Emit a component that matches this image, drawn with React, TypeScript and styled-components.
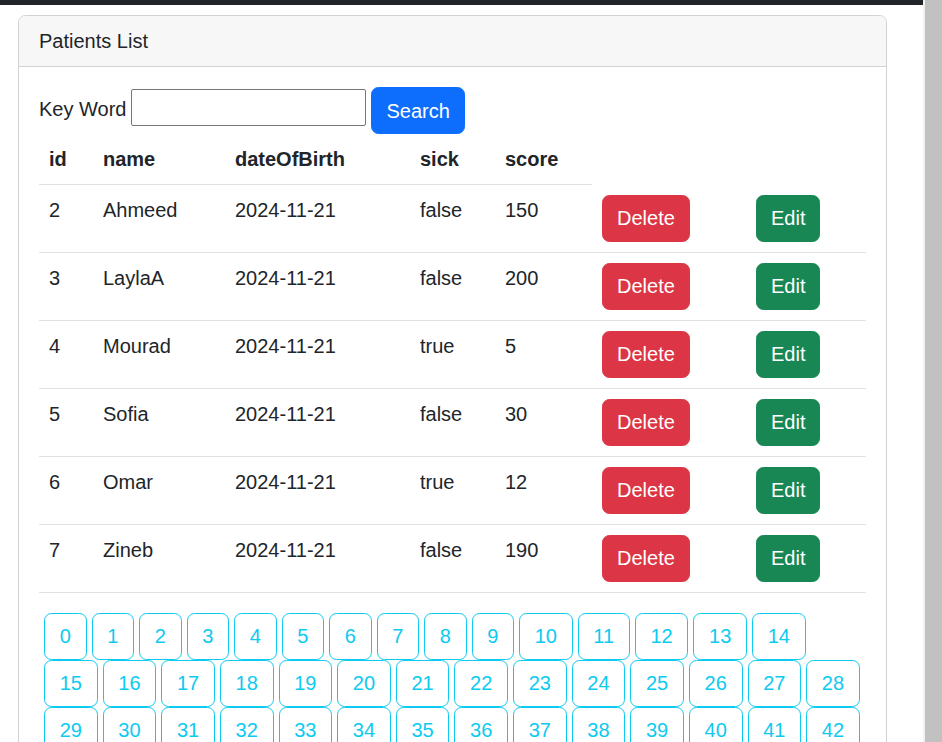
import React from "react";
import styled, { createGlobalStyle } from "styled-components";

const GlobalStyle = createGlobalStyle`
  html, body { margin: 0; padding: 0; height: 100%; overflow: hidden; }
  *, *::before, *::after { box-sizing: border-box; }
  body {
    font-family: "Liberation Sans", Arial, sans-serif;
    font-size: 20px;
    line-height: 30px;
    color: #212529;
    background: #ffffff;
  }
`;

const Shell = styled.div`
  display: flex;
  height: 100vh;
`;

const Viewport = styled.div`
  flex: 1;
  min-width: 0;
  overflow-y: auto;
  scrollbar-width: none;
  &::-webkit-scrollbar { display: none; }
`;

const ScrollRail = styled.div`
  flex: 0 0 19px;
  background: #c1c1c1;
  border-left: 2px solid #f1f1f1;
`;

const TopBar = styled.div`
  height: 5px;
  background: #212529;
`;

const Page = styled.main`
  padding: 10px 36px 40px 18px;
`;

const Card = styled.section`
  border: 1px solid #d2d2d2;
  border-radius: 7.5px;
  background: #fff;
  overflow: hidden;
`;

const CardHeader = styled.header`
  padding: 10px 20px;
  background: #f7f7f7;
  border-bottom: 1px solid #d2d2d2;
`;

const CardBody = styled.div`
  padding: 20px;
`;

const SearchForm = styled.form`
  display: flex;
  align-items: flex-start;
  gap: 5px;
`;

const Label = styled.label`
  margin-top: 7px;
`;

const KeyInput = styled.input`
  width: 235px;
  height: 37px;
  margin-top: 2px;
  border: 1px solid #767676;
  border-radius: 2px;
  padding: 1px 3px;
  font: inherit;
  font-size: 17px;
`;

type Variant = "primary" | "danger" | "success";
const colors: Record<Variant, string> = {
  primary: "#0d6efd",
  danger: "#dc3545",
  success: "#198754",
};

const Button = styled.button<{ $variant: Variant }>`
  display: inline-block;
  vertical-align: top;
  padding: 7.5px 14px;
  border: 1px solid ${(p) => colors[p.$variant]};
  border-radius: 7.5px;
  background: ${(p) => colors[p.$variant]};
  color: #fff;
  font: inherit;
  line-height: 30px;
  cursor: pointer;
`;

const Table = styled.table`
  width: 100%;
  table-layout: fixed;
  border-collapse: collapse;
  margin-bottom: 20px;
`;

const Th = styled.th`
  padding: 10px;
  text-align: left;
  font-weight: 700;
  border-bottom: 1px solid #dee2e6;
`;

const Td = styled.td`
  padding: 10px;
  vertical-align: top;
  border-bottom: 1px solid #dee2e6;
`;

const Pager = styled.nav`
  display: flex;
  flex-wrap: wrap;
  padding-right: 4px;
`;

const PageButton = styled.button`
  margin-left: 5px;
  padding: 7.5px 14.7px;
  border: 1px solid #0dcaf0;
  border-radius: 7.5px;
  background: transparent;
  color: #0dcaf0;
  font: inherit;
  line-height: 30px;
  cursor: pointer;
`;

const patients = [
  { id: 2, name: "Ahmeed", dob: "2024-11-21", sick: false, score: 150 },
  { id: 3, name: "LaylaA", dob: "2024-11-21", sick: false, score: 200 },
  { id: 4, name: "Mourad", dob: "2024-11-21", sick: true, score: 5 },
  { id: 5, name: "Sofia", dob: "2024-11-21", sick: false, score: 30 },
  { id: 6, name: "Omar", dob: "2024-11-21", sick: true, score: 12 },
  { id: 7, name: "Zineb", dob: "2024-11-21", sick: false, score: 190 },
];

const colWidths = [54, 132, 185, 85, 97, 154, 120];
const pages = Array.from({ length: 56 }, (_, i) => i);

export default function App() {
  return (
    <>
      <GlobalStyle />
      <Shell>
        <Viewport>
          <TopBar />
          <Page>
            <Card>
              <CardHeader>Patients List</CardHeader>
              <CardBody>
                <SearchForm onSubmit={(e) => e.preventDefault()}>
                  <Label htmlFor="kw">Key Word</Label>
                  <KeyInput id="kw" type="text" />
                  <Button $variant="primary" type="submit">Search</Button>
                </SearchForm>
                <Table>
                  <colgroup>
                    {colWidths.map((w, i) => (
                      <col key={i} style={{ width: w }} />
                    ))}
                  </colgroup>
                  <thead>
                    <tr>
                      <Th>id</Th>
                      <Th>name</Th>
                      <Th>dateOfBirth</Th>
                      <Th>sick</Th>
                      <Th>score</Th>
                    </tr>
                  </thead>
                  <tbody>
                    {patients.map((p) => (
                      <tr key={p.id}>
                        <Td>{p.id}</Td>
                        <Td>{p.name}</Td>
                        <Td>{p.dob}</Td>
                        <Td>{String(p.sick)}</Td>
                        <Td>{p.score}</Td>
                        <Td>
                          <Button $variant="danger">Delete</Button>
                        </Td>
                        <Td>
                          <Button $variant="success">Edit</Button>
                        </Td>
                      </tr>
                    ))}
                  </tbody>
                </Table>
                <Pager>
                  {pages.map((n) => (
                    <PageButton key={n}>{n}</PageButton>
                  ))}
                </Pager>
              </CardBody>
            </Card>
          </Page>
        </Viewport>
        <ScrollRail />
      </Shell>
    </>
  );
}
